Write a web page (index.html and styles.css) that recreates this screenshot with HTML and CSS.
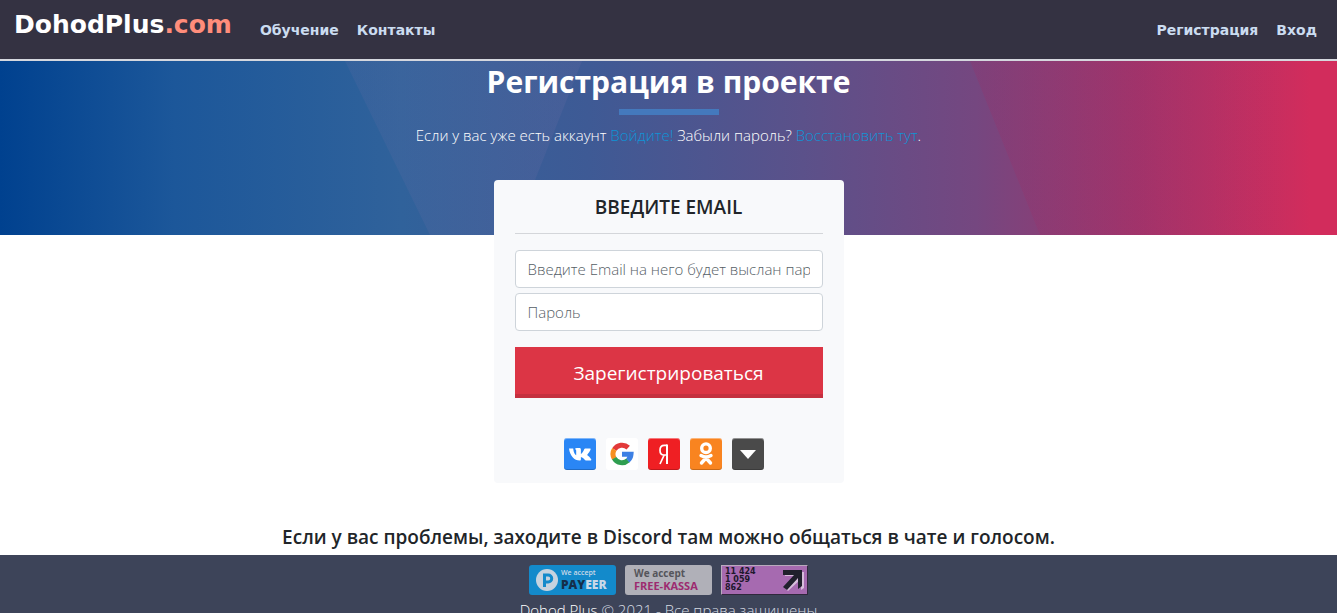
FILE: index.html
```html
<!DOCTYPE html>
<html lang="ru">
<head>
<meta charset="utf-8">
<meta name="viewport" content="width=device-width, initial-scale=1">
<title>Регистрация в проекте</title>
<link rel="stylesheet" href="styles.css">
</head>
<body>
<header class="navbar">
  <a class="brand" href="#">DohodPlus<span class="brand-zone">.com</span></a>
  <nav class="menu">
    <a href="#">Обучение</a>
    <a href="#">Контакты</a>
  </nav>
  <nav class="menu menu-account">
    <a href="#">Регистрация</a>
    <a href="#">Вход</a>
  </nav>
</header>

<main>
  <section class="hero">
    <svg class="facets" viewBox="0 0 1337 174" preserveAspectRatio="none" aria-hidden="true">
      <defs>
        <linearGradient id="fade-left"><stop offset="0" stop-color="#7a72a8" stop-opacity=".13"/><stop offset="1" stop-color="#7a72a8" stop-opacity=".16"/></linearGradient>
        <linearGradient id="fade-right"><stop offset="0" stop-color="#b21d58" stop-opacity=".16"/><stop offset="1" stop-color="#b21d58" stop-opacity="0"/></linearGradient>
      </defs>
      <path d="M345 0H582L535 119L510 174H430Z" fill="url(#fade-left)"/>
      <path d="M970 0H1300V174H1040Z" fill="url(#fade-right)"/>
    </svg>
    <h1>Регистрация в проекте</h1>
    <div class="rule"></div>
    <p>Если у вас уже есть аккаунт <a href="#">Войдите!</a> Забыли пароль? <a href="#">Восстановить тут</a>.</p>
  </section>

  <form class="card">
    <h2>ВВЕДИТЕ EMAIL</h2>
    <hr>
    <div class="fields">
      <input type="email" aria-label="Email" placeholder="Введите Email на него будет выслан пароль">
      <input type="password" aria-label="Пароль" placeholder="Пароль">
    </div>
    <button class="submit" type="submit">Зарегистрироваться</button>
    <div class="socials">
      <button class="social vk" type="button" aria-label="ВКонтакте">
        <svg viewBox="0 0 32 32"><path d="M5 10.500h4.200c.4 4 1.800 6.200 3 6.800v-4.600c0-1-.5-1.500-1.300-1.800.5-.6 1.300-.9 2.700-.9h1.600c1.300 0 1.700.6 1.700 1.700v4.300c1.400-.5 2.600-2.800 3.200-4.400.3-.8.7-1.100 1.500-1.100h4.200c.8 0 1 .4.800 1.100-.5 1.600-2.200 3.700-3.500 5.300 1.600 1.300 3.300 2.900 4.100 4.400.3.800-.1 1.200-.9 1.200h-4.200c-.7 0-1.200-.3-1.600-.9-.8-1.200-2-2.400-3.600-2.700v2.400c0 .8-.3 1.200-1.200 1.200C10.200 22.500 6 18 5 10.500z" fill="#fff"/></svg>
      </button>
      <button class="social google" type="button" aria-label="Google">
        <svg viewBox="0 0 32 32" fill="none" stroke-width="5"><path d="M8.300 11.600A9 9 0 0 1 22.200 9.600" stroke="#e23a3a"/><path d="M8.300 20.600A9 9 0 0 1 8.300 11.400" stroke="#f68f20"/><path d="M22 22.400A9 9 0 0 1 8.200 20.300" stroke="#2f9e50"/><path d="M16 16.300H25A9 9 0 0 1 21.800 22.500" stroke="#3d80e4"/></svg>
      </button>
      <button class="social yandex" type="button" aria-label="Яндекс">
        <svg viewBox="0 0 32 32" fill="none" stroke="#fff"><path d="M19 6.500V26" stroke-width="2"/><path d="M19 7.300H16.300C13 7.300 12 9.600 12 12.200C12 15.200 13.500 17 16 17H19M16.200 17L12 26" stroke-width="1.700"/></svg>
      </button>
      <button class="social ok" type="button" aria-label="Одноклассники">
        <svg viewBox="0 0 32 32" fill="none" stroke="#fff" stroke-width="3.400" stroke-linecap="round"><circle cx="16" cy="10.200" r="4.300"/><path d="M11 17.500Q16 20.500 21 17.500M16 20L11.500 25M16 20L20.500 25"/></svg>
      </button>
      <button class="social more" type="button" aria-label="Другие способы входа">
        <svg viewBox="0 0 32 32"><path d="M8 12H24L16 21Z" fill="#fff"/></svg>
      </button>
    </div>
  </form>

  <h3 class="help">Если у вас проблемы, заходите в Discord там можно общаться в чате и голосом.</h3>
</main>

<footer class="footer">
  <div class="badges">
    <a class="badge payeer" href="#">
      <svg class="payeer-mark" viewBox="0 0 22 22" aria-hidden="true"><circle cx="11" cy="11" r="11" fill="#c6d3df"/><path d="M8.500 18V6H12.200A3.500 3.500 0 0 1 12.200 13H8.500" fill="none" stroke="#138acb" stroke-width="3"/></svg>
      <span class="badge-text"><small>We accept</small><b><i>PAY</i>EER</b></span>
    </a>
    <a class="badge kassa" href="#"><small>We accept</small><b>FREE-KASSA</b></a>
    <a class="badge counter" href="#">
      <span class="counts"><span>11 424</span><span>1 059</span><span>862</span></span>
      <svg class="arrow" viewBox="0 0 24 24" aria-hidden="true"><path d="M5 7L7 4H24V20L21 22V11L8 23L5 20L16 8H5Z" fill="#d7bddb"/><path d="M3 2H22V18L18 21V10L7 22L3 19L14 7H3Z" fill="#20202c"/></svg>
    </a>
  </div>
  <p class="copyright"><a href="#">Dohod Plus</a> © 2021 - Все права защищены</p>
</footer>
</body>
</html>
```
FILE: styles.css
```css
* { box-sizing: border-box; }
html { scrollbar-width: none; }
body {
  margin: 0;
  font: 300 15px/24px "Open Sans", "Noto Sans", sans-serif;
  color: #212529;
  background: #fff;
}
a { text-decoration: none; color: inherit; }
h1, h2, h3, p { margin: 0; }

.navbar {
  display: flex;
  align-items: center;
  height: 61px;
  padding: 0 20px 0 14px;
  border-bottom: 2px solid #d5d7de;
  background: #343242;
  font-family: "DejaVu Sans", sans-serif;
  font-weight: 700;
}
.brand { color: #fff; font-size: 25px; line-height: 36px; padding-bottom: 10px; }
.brand-zone { color: #ff8d7b; }
.menu { display: flex; gap: 18px; margin-left: 28px; color: #cbdcf0; font-size: 14px; }
.menu-account { margin-left: auto; }

.hero {
  position: relative;
  display: flex;
  flex-direction: column;
  align-items: center;
  padding: 2px 16px 88px;
  color: #fff;
  text-align: center;
  background: linear-gradient(90deg, #00418f 0%, #1c579a 13%, #30629b 30%, #3e5a95 44%, #5b518a 60%, #754780 73%, #9f356c 85%, #d22c5c 98%, #d22c5c 100%);
}
.hero > * { position: relative; }
.hero .facets { position: absolute; inset: 0; width: 100%; height: 100%; }
.hero h1 { font-size: 30px; line-height: 38px; font-weight: 700; }
.rule { width: 100px; height: 6px; margin: 8px 0; background: #4479bd; }
.hero a { color: #0f94d6; }

.card {
  position: relative;
  width: 350px;
  max-width: 100%;
  margin: -55px auto 0;
  padding: 15px 21px 13px;
  border-radius: 4px;
  background: #f8f9fb;
}
.card h2 { font-size: 19px; line-height: 24px; font-weight: 600; text-align: center; }
.card hr { margin: 14px 0 16px; border: 0; border-top: 1px solid #d4d6da; }
.fields { display: grid; gap: 5px; }
.fields input {
  width: 100%;
  height: 38px;
  padding: 6px 12px;
  border: 1px solid #ced4da;
  border-radius: 4px;
  background: #fff;
  font: inherit;
}
.fields input::placeholder { color: #565e66; opacity: 1; }
.submit {
  display: block;
  width: 100%;
  height: 51px;
  margin-top: 16px;
  padding: 4px 6px 0;
  border: 0;
  border-bottom: 4px solid #c5303f;
  background: #dc3545;
  color: #fff;
  font: 400 19px/24px "Open Sans", "Noto Sans", sans-serif;
}
.socials { display: flex; gap: 10px; margin: 40px 0 0 49px; }
.social { width: 32px; height: 32px; padding: 0; border: 0; border-radius: 3px; box-shadow: inset 0 1px #ffffff66, inset 0 -1px #00000033; }
.social svg { display: block; }
.vk { background: #2a86f5; }
.google { background: #fff; box-shadow: none; }
.yandex { background: #ef1f23; }
.ok { background: #f98420; }
.more { background: #4a4a4a; }

.help { margin-top: 42px; padding: 0 16px 6px; font-size: 19px; line-height: 24px; font-weight: 600; text-align: center; }

.footer { padding-top: 10px; background: #3d4459; color: #d7dce3; text-align: center; }
.badges { display: flex; justify-content: center; align-items: center; gap: 9px; }
.badge { height: 30px; width: 87px; border-radius: 3px; text-align: left; }
.badge small, .badge b { display: block; }
.payeer { display: flex; align-items: center; gap: 3px; padding-left: 7px; background: #138acb; color: #c9d9e8; }
.payeer-mark { width: 22px; height: 22px; flex: none; }
.payeer small { font-size: 7px; line-height: 10px; font-weight: 600; }
.payeer b { font-size: 12px; line-height: 14px; font-weight: 800; }
.payeer i { font-style: normal; color: #152e4a; }
.kassa { padding: 2px 9px; background: #b0b0b8; color: #55555b; }
.kassa small { font-size: 10px; line-height: 12px; font-weight: 700; }
.kassa b { font-size: 11px; line-height: 13px; font-weight: 700; color: #9d2b70; white-space: nowrap; }
.counter { display: flex; justify-content: space-between; padding: 2px 3px; border: 1px solid #b9aabd; border-right-color: #30283c; border-bottom-color: #30283c; border-radius: 0; background: #a66ab0; color: #20182c; }
.counts { display: grid; font: 700 8px/8px "DejaVu Sans", sans-serif; }
.counts span { white-space: nowrap; }
.arrow { width: 24px; height: 24px; }
.copyright { margin-top: 3px; line-height: 24px; }
.copyright a { color: #fff; }
```
